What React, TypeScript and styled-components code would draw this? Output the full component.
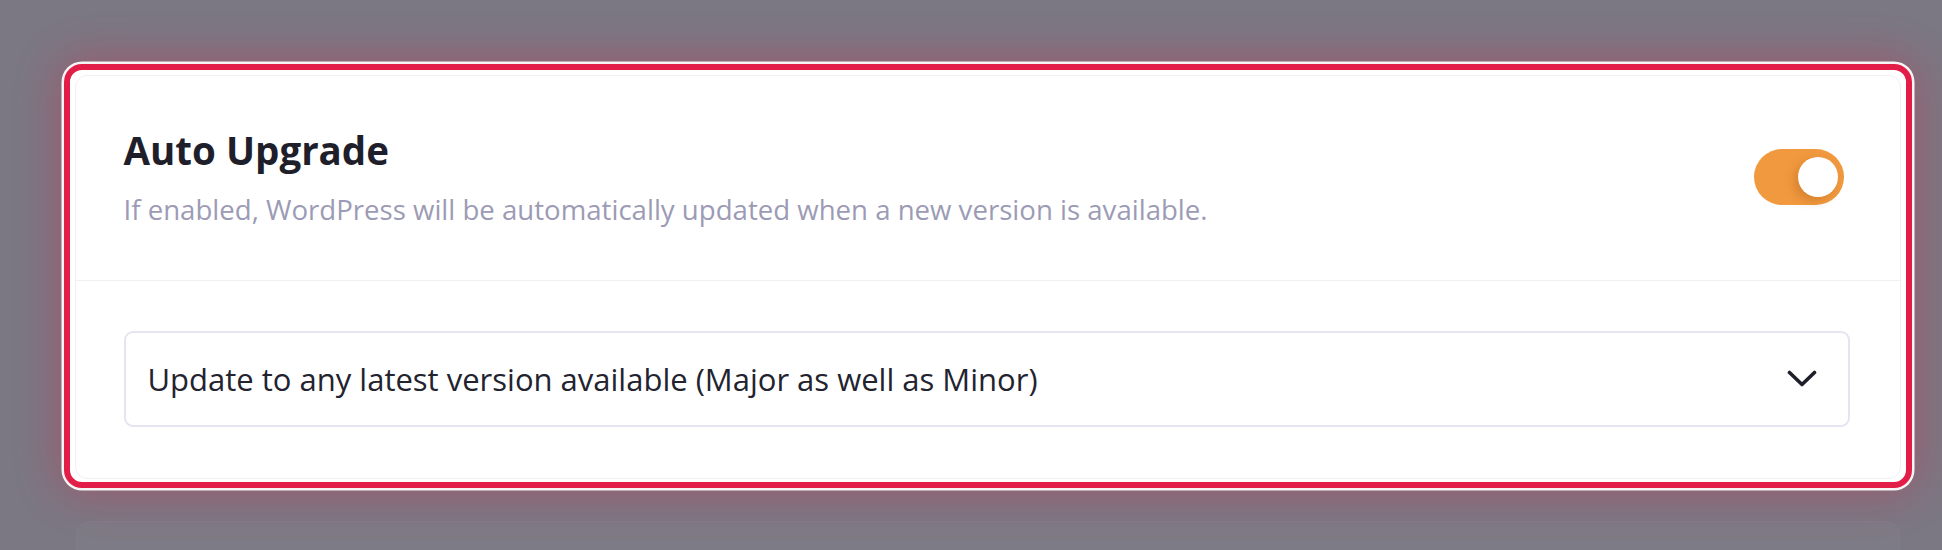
import styled, { createGlobalStyle } from 'styled-components';

const GlobalStyle = createGlobalStyle`
  html, body {
    margin: 0;
    padding: 0;
    background: #7b7883;
    font-family: 'Open Sans', 'Noto Sans', sans-serif;
  }
`;

const ChevronDown = () => (
  <svg width="30" height="18" viewBox="0 0 30 18" fill="none">
    <polyline
      points="2.5,2.5 15,14.5 27.5,2.5"
      stroke="#1f1f2b"
      strokeWidth="3.6"
      strokeLinecap="round"
      strokeLinejoin="round"
    />
  </svg>
);

export default function App() {
  return (
    <>
      <GlobalStyle />
      <Page>
        <Highlight>
          <Card>
            <Header>
              <TextBlock>
                <Title>Auto Upgrade</Title>
                <Description>
                  If enabled, WordPress will be automatically updated when a new version is available.
                </Description>
              </TextBlock>
              <Toggle role="switch" aria-checked="true">
                <Knob />
              </Toggle>
            </Header>
            <Body>
              <Select>
                <SelectValue>Update to any latest version available (Major as well as Minor)</SelectValue>
                <ChevronDown />
              </Select>
            </Body>
          </Card>
        </Highlight>
        <NextCard />
      </Page>
    </>
  );
}

const Page = styled.div`
  height: 550px;
  overflow: hidden;
  padding: 64px 30px 0 64px;
  box-sizing: border-box;
`;

const Highlight = styled.div`
  background: #fff;
  border: 6px solid #e11d48;
  border-radius: 18px;
  padding: 5px 5px 3px 5px;
  box-shadow: 0 0 0 2.5px #f6f5f6, 0 0 44px 6px rgba(225, 29, 72, 0.32);
  position: relative;
  z-index: 1;
`;

const Card = styled.div`
  background: #fff;
  border: 1.5px solid #f0f0f4;
  border-radius: 12px;
`;

const Header = styled.div`
  display: flex;
  align-items: center;
  justify-content: space-between;
  padding: 50px 56px 53px 47.5px;
  border-bottom: 1.5px solid #efeff4;
`;

const TextBlock = styled.div`
  display: flex;
  flex-direction: column;
  gap: 17px;
`;

const Title = styled.h2`
  margin: 0;
  font-size: 38.5px;
  line-height: 48px;
  font-weight: 700;
  color: #1f1f2b;
`;

const Description = styled.p`
  margin: 0;
  font-size: 27.6px;
  line-height: 36px;
  color: #9c9bb5;
`;

const Toggle = styled.div`
  width: 90px;
  height: 56px;
  border-radius: 28px;
  background: #f0993f;
  display: flex;
  align-items: center;
  justify-content: flex-end;
  padding: 0 6px;
  box-sizing: border-box;
`;

const Knob = styled.div`
  width: 40px;
  height: 40px;
  border-radius: 50%;
  background: #fff;
  box-shadow: -4px 4px 10px rgba(170, 90, 20, 0.35);
`;

const Body = styled.div`
  padding: 50px 50px 51px 47.5px;
`;

const Select = styled.div`
  height: 96px;
  box-sizing: border-box;
  border: 2px solid #e6e4f0;
  border-radius: 9px;
  display: flex;
  align-items: center;
  justify-content: space-between;
  padding: 0 31px 0 22px;
  background: #fff;
`;

const SelectValue = styled.span`
  font-size: 31px;
  color: #23232f;
`;

const NextCard = styled.div`
  margin: 33px 12px 0 12px;
  height: 120px;
  border-radius: 14px;
  background: #7d7b85;
  border: 1px solid #807e88;
`;
